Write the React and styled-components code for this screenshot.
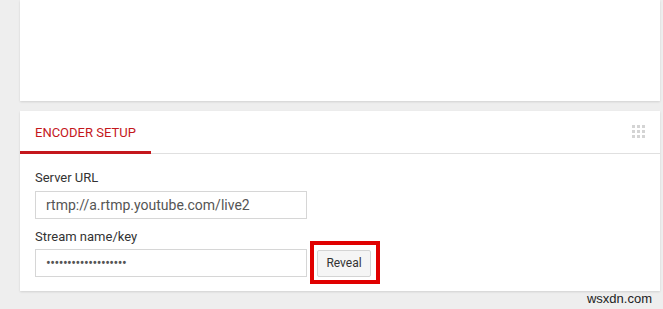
import React from "react";
import styled, { createGlobalStyle } from "styled-components";

const Global = createGlobalStyle`
  html, body { margin: 0; padding: 0; background: #eeeeee; }
  body { font-family: Roboto, "Liberation Sans", Arial, sans-serif; }
`;

const Page = styled.div`
  position: relative;
  width: 663px;
  height: 309px;
  box-sizing: border-box;
  padding: 0 3px 0 20px;
  display: flex;
  flex-direction: column;
  gap: 10px;
  overflow: hidden;
`;

const Card = styled.div`
  background: #ffffff;
  box-shadow: 0 1px 2px rgba(0, 0, 0, 0.12);
  height: ${(p) => (p.$h ? `${p.$h}px` : "auto")};
`;

const Header = styled.div`
  height: 42px;
  display: flex;
  align-items: stretch;
  justify-content: space-between;
  border-bottom: 1px solid #e0e0e0;
`;

const Tab = styled.div`
  width: 131px;
  box-sizing: border-box;
  padding: 2px 0 0 15px;
  display: flex;
  align-items: center;
  font-size: 13px;
  color: #c4171c;
  border-bottom: 3px solid #c4171c;
  margin-bottom: -1px;
`;

const Handle = styled.div`
  display: grid;
  grid-template-columns: repeat(3, 3px);
  grid-auto-rows: 3px;
  gap: 2px;
  align-self: center;
  margin-right: 15px;
  margin-top: -2px;
`;

const Dot = styled.span`
  background: #d4d4d4;
`;

const Body = styled.div`
  padding: 15px 15px 14px 15px;
  display: flex;
  flex-direction: column;
`;

const Label = styled.div`
  font-size: 13px;
  color: #333333;
  line-height: 17px;
  margin-bottom: ${(p) => p.$mb}px;
  margin-top: ${(p) => p.$mt || 0}px;
`;

const Row = styled.div`
  display: flex;
  align-items: center;
`;

const Input = styled.div`
  width: 272px;
  height: 28px;
  box-sizing: border-box;
  border: 1px solid #d6d6d6;
  padding: 0 10px;
  display: flex;
  align-items: center;
  font-size: 14px;
  color: #555555;
  letter-spacing: ${(p) => (p.$pw ? "-0.5px" : "0")};
`;

const Button = styled.div`
  position: relative;
  margin-left: 10px;
  width: 54px;
  height: 27px;
  box-sizing: border-box;
  border: 1px solid #d4d4d4;
  border-radius: 2px;
  background: #f5f5f5;
  display: flex;
  align-items: center;
  justify-content: center;
  font-size: 12px;
  color: #333333;

  &::after {
    content: "";
    position: absolute;
    top: -10px;
    left: -8px;
    right: -10px;
    bottom: -8px;
    border: 4px solid #e00000;
  }
`;

const Watermark = styled.div`
  position: absolute;
  right: 11px;
  bottom: 3px;
  font-family: "Liberation Sans", Arial, sans-serif;
  font-size: 13px;
  color: #222222;
`;

export default function App() {
  return (
    <>
      <Global />
      <Page>
        <Card $h={101} />
        <Card>
          <Header>
            <Tab>ENCODER SETUP</Tab>
            <Handle>
              {Array.from({ length: 9 }).map((_, i) => (
                <Dot key={i} />
              ))}
            </Handle>
          </Header>
          <Body>
            <Label $mb={5}>Server URL</Label>
            <Input>rtmp://a.rtmp.youtube.com/live2</Input>
            <Label $mt={9} $mb={4}>Stream name/key</Label>
            <Row>
              <Input $pw>{"•".repeat(19)}</Input>
              <Button>Reveal</Button>
            </Row>
          </Body>
        </Card>
        <Watermark>wsxdn.com</Watermark>
      </Page>
    </>
  );
}
